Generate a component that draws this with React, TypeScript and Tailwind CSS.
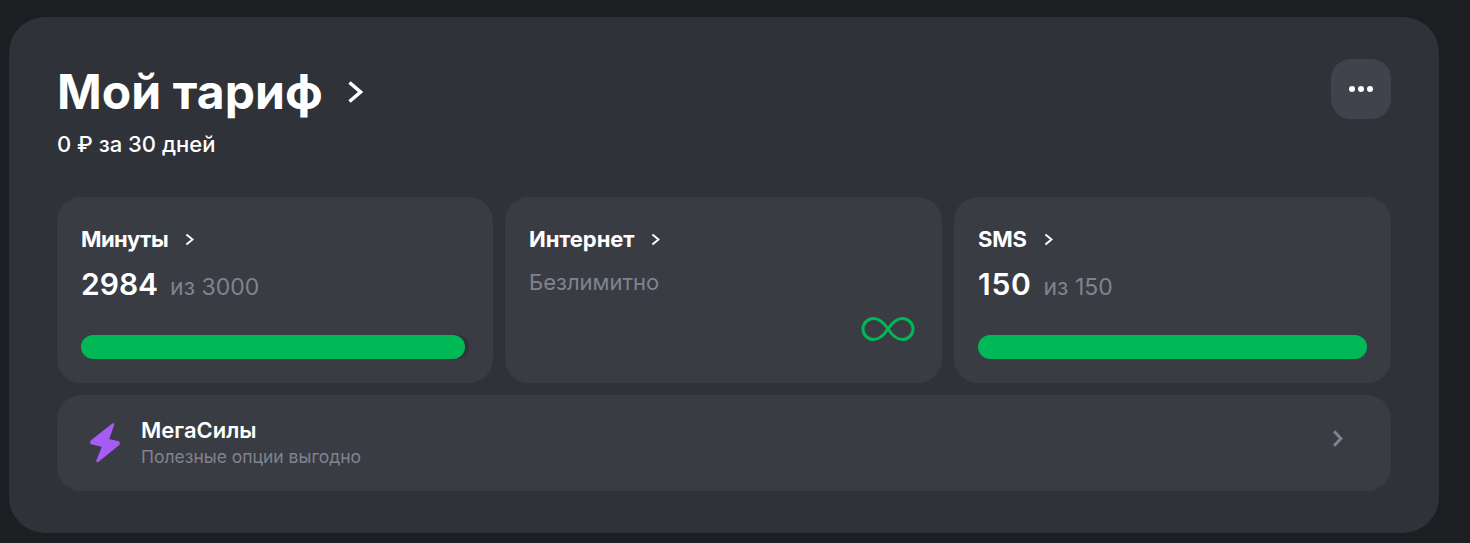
const font = { fontFamily: 'Inter, "Liberation Sans", sans-serif' };

function Chevron({ w, h, sw, color, className }: { w: number; h: number; sw: number; color: string; className?: string }) {
  const pad = sw / 1.4;
  return (
    <svg width={w} height={h} viewBox={`0 0 ${w} ${h}`} fill="none" className={className}>
      <path d={`M${pad} ${pad}L${w - pad} ${h / 2}L${pad} ${h - pad}`} stroke={color} strokeWidth={sw} />
    </svg>
  );
}

function CardTitle({ title, tracking }: { title: string; tracking: string }) {
  return (
    <div className="flex h-6 items-center gap-[17px]">
      <span className={`text-[22px] leading-6 font-bold text-white ${tracking}`}>{title}</span>
      <Chevron w={9} h={13} sw={2} color="white" />
    </div>
  );
}

function Progress({ fill }: { fill: string }) {
  return (
    <div className="mt-auto h-6 w-full rounded-full bg-[#2f3238]">
      <div className={`h-6 rounded-full bg-[#00b956] ${fill}`} />
    </div>
  );
}

function Counter({ value, total, tracking }: { value: string; total: string; tracking?: string }) {
  return (
    <div className="mt-[15px] flex items-baseline gap-3">
      <span className={`text-[30px] leading-9 font-semibold text-white ${tracking ?? ''}`}>{value}</span>
      <span className="text-[23px] leading-9 text-[#80838f]">{total}</span>
    </div>
  );
}

export default function App() {
  return (
    <div style={font} className="h-[543px] w-[1470px] overflow-hidden bg-[#1d1e22] pt-[17px] pl-[9px]">
      <div className="h-[516px] w-[1430px] rounded-[36px] bg-[#2f3238] px-12 pt-[42px]">
        <div className="flex items-start justify-between">
          <div>
            <div className="flex h-[66px] items-center gap-[24px]">
              <h1 className="text-[48px] leading-[66px] font-bold tracking-[0.1px] text-white">Мой тариф</h1>
              <Chevron w={16} h={24} sw={3.500} color="white" />
            </div>
            <div className="mt-[7px] text-[22px] leading-6 font-medium text-white">0 ₽ за 30 дней</div>
          </div>
          <button type="button" className="flex size-[60px] items-center justify-center rounded-[20px] bg-[#40434b]">
            <svg width="24" height="6" viewBox="0 0 24 6" fill="white">
              <circle cx="3" cy="3" r="3" />
              <circle cx="12" cy="3" r="3" />
              <circle cx="21" cy="3" r="3" />
            </svg>
          </button>
        </div>

        <div className="mt-[41px] grid grid-cols-[436px_437px_437px] gap-3">
          <div className="flex h-[186px] flex-col rounded-3xl bg-[#393c43] px-6 pt-[30px] pb-6">
            <CardTitle title="Минуты" tracking="tracking-[-0.6px]" />
            <Counter value="2984" total="из 3000" />
            <Progress fill="w-[99%]" />
          </div>
          <div className="flex h-[186px] flex-col rounded-3xl bg-[#393c43] px-6 pt-[30px] pb-6">
            <CardTitle title="Интернет" tracking="tracking-[-0.1px]" />
            <div className="mt-[13px] text-[22px] leading-9 text-[#80838f]">Безлимитно</div>
            <svg width="54" height="24" viewBox="0 0 54 24" fill="none" className="mt-auto mr-[3px] mb-[18px] ml-auto">
              <path
                d="M27 12C31 6 35 1.500 41.500 1.500a10.500 10.500 0 0 1 0 21C35 22.500 31 18 27 12C23 6 19 1.500 12.500 1.500a10.500 10.500 0 0 0 0 21C19 22.500 23 18 27 12Z"
                stroke="#00b956"
                strokeWidth="3"
              />
            </svg>
          </div>
          <div className="flex h-[186px] flex-col rounded-3xl bg-[#393c43] px-6 pt-[30px] pb-6">
            <CardTitle title="SMS" tracking="tracking-[-0.2px]" />
            <Counter value="150" total="из 150" tracking="tracking-[0.7px]" />
            <Progress fill="w-full" />
          </div>
        </div>

        <div className="mt-3 flex h-24 items-center rounded-3xl bg-[#393c43] pr-[48px] pl-[33px]">
          <svg width="30" height="40" viewBox="0 0 30 40" fill="#a75cf5" className="shrink-0">
            <path
              d="M23 1.500 1.500 18.500V20L13.500 23 7.500 38 28.500 21V19.500L17.500 17Z"
              stroke="#a75cf5"
              strokeWidth="2.500"
              strokeLinejoin="round"
            />
          </svg>
          <div className="ml-[21px] flex-1">
            <div className="text-[22px] leading-6 font-semibold text-white">МегаСилы</div>
            <div className="mt-[3px] text-[17.500px] leading-6 text-[#80838f]">Полезные опции выгодно</div>
          </div>
          <Chevron w={11} h={19} sw={3} color="#80838f" className="mb-[9px]" />
        </div>
      </div>
    </div>
  );
}
